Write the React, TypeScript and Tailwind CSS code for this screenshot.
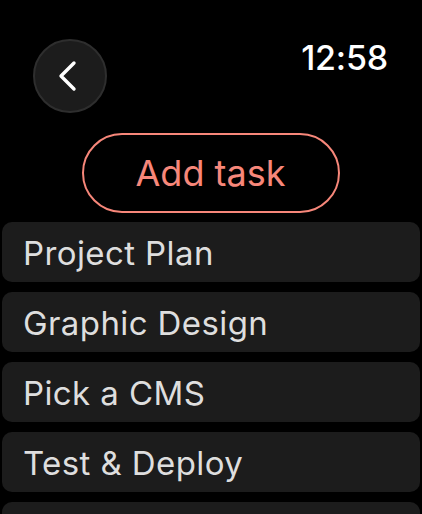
const tasks = ['Project Plan', 'Graphic Design', 'Pick a CMS', 'Test & Deploy', '']

export default function App() {
  return (
    <div className="w-[422px] h-[514px] overflow-hidden bg-black font-['Inter',sans-serif]">
      <div className="flex items-start justify-between pt-[39px] pl-[33px] pr-[34px]">
        <button className="flex h-[74px] w-[74px] items-center justify-center rounded-full border-2 border-[#2e2e2e] bg-[#1c1c1c]">
          <svg width="22" height="32" viewBox="0 0 22 32" className="-ml-[6px]" fill="none">
            <path d="M18 3 L5 16 L18 29" stroke="white" strokeWidth="3.4" strokeLinecap="round" strokeLinejoin="round" />
          </svg>
        </button>
        <div className="-mt-[1px] text-[34px] font-medium leading-[40px] tracking-[-0.2px] text-white">12:58</div>
      </div>

      <div className="mt-[20px] flex justify-center">
        <button className="-ml-[1px] flex h-[80px] w-[258px] items-center justify-center rounded-full border-2 border-[#f7877a] text-[36px] text-[#f7877a]">
          Add task
        </button>
      </div>

      <div className="mt-[9px] flex flex-col gap-[10px] px-[2px]">
        {tasks.map((t, i) => (
          <div key={i} className="flex h-[60px] items-center rounded-[10px] bg-[#1c1c1c] pl-[21px] pt-[3px] text-[33px] tracking-[0.4px] text-[#dedede]">
            {t}
          </div>
        ))}
      </div>
    </div>
  )
}
